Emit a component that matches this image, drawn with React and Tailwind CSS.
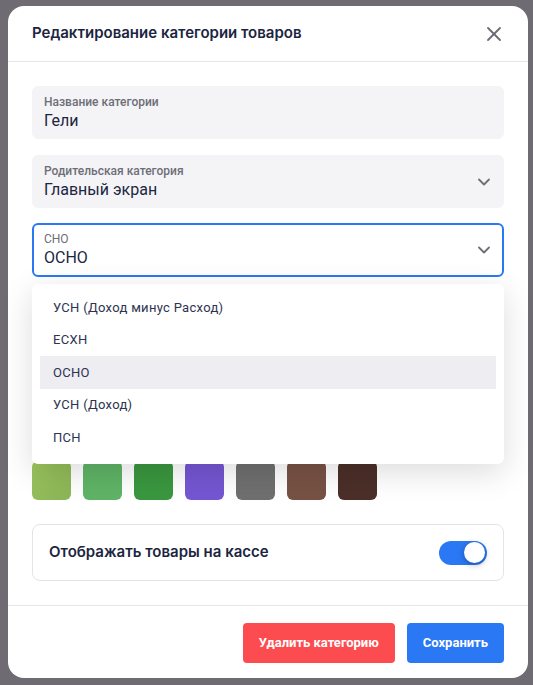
import React, { useState } from "react";
import { X, ChevronDown } from "lucide-react";

const SNO_OPTIONS = ["УСН (Доход минус Расход)", "ЕСХН", "ОСНО", "УСН (Доход)", "ПСН"];

const COLORS = [
    "bg-[#e35252]", "bg-[#e87a3e]", "bg-[#f0b43c]", "bg-[#3d8bf2]", "bg-[#2fb5c9]", "bg-[#d455a6]", "bg-[#9e9e9e]",
    "bg-[#ef5b7a]", "bg-[#f39c50]", "bg-[#e8cf4a]", "bg-[#4a6fe0]", "bg-[#36a89c]", "bg-[#a65ad0]", "bg-[#c0c0c0]",
    "bg-[linear-gradient(135deg,#9cc45e,#8ab556)]", "bg-[#5fb366]", "bg-[#3a973f]", "bg-[#7556d2]", "bg-[#6f6f6f]", "bg-[#775244]", "bg-[#4b2f28]",
];

// Field with floating label on grey background
const Field = ({ label, value, select }) => (
    <div className="flex items-center h-[53px] rounded-md bg-[#f4f4f7] pl-3 pr-[10px]">
        <div className="flex-1 flex flex-col">
            <span className="text-[12px] leading-[16px] font-medium text-[#6e6e78]">{label}</span>
            <span className="text-[16px] leading-[22px] text-[#1c2640]">{value}</span>
        </div>
        {select && <ChevronDown size={20} strokeWidth={2.2} className="text-[#6e6e78]" />}
    </div>
);

export default function App() {
    const [enabled, setEnabled] = useState(true);

    return (
        <div className="w-[533px] h-[685px] bg-[#6f6b72] pt-[6px] pl-2 font-['Roboto',sans-serif]">
            <div className="w-[520px] h-[672px] bg-white rounded-2xl flex flex-col">
                {/* Header */}
                <div className="flex items-center justify-between h-[56px] pl-6 pr-[22px] border-b border-[#e4e4ea]">
                    <h3 className="font-['Inter',sans-serif] font-semibold text-[15px] text-[#1b2540]">
                        Редактирование категории товаров
                    </h3>
                    <X size={24} strokeWidth={1.8} className="text-[#6b6b78]" />
                </div>

                {/* Body */}
                <div className="flex-1 px-6 pt-6 flex flex-col">
                    <Field label="Название категории" value="Гели" />
                    <div className="mt-4">
                        <Field label="Родительская категория" value="Главный экран" select />
                    </div>

                    <div className="relative mt-[15px]">
                        <div className="flex items-center h-[54px] rounded-md border-2 border-[#2b78f4] bg-white pl-[10px] pr-[8px]">
                            <div className="flex-1 flex flex-col">
                                <span className="text-[12px] leading-[16px] text-[#6e6e78]">СНО</span>
                                <span className="text-[16px] leading-[22px] text-[#1c2640]">ОСНО</span>
                            </div>
                            <ChevronDown size={20} strokeWidth={2.2} className="text-[#6e6e78]" />
                        </div>

                        {/* Dropdown menu */}
                        <div className="absolute z-10 left-0 right-0 top-[61px] bg-white rounded-md shadow-[0_8px_32px_rgba(0,0,0,0.14)] pt-[7px] pb-[10px] px-2">
                            {SNO_OPTIONS.map((opt) => (
                                <div
                                    key={opt}
                                    className={`h-[32.5px] flex items-center px-[13px] text-[13px] tracking-[0.3px] text-[#2d3450] ${opt === "ОСНО" ? "bg-[#eeedf2]" : ""}`}
                                >
                                    {opt}
                                </div>
                            ))}
                        </div>
                    </div>

                    {/* Colours (mostly under the open menu) */}
                    <div className="mt-[84px] grid grid-cols-[repeat(7,39px)] gap-x-3 gap-y-[11px]">
                        {COLORS.map((c, i) => (
                            <div key={i} className={`h-[39px] rounded-md ${c}`} />
                        ))}
                    </div>

                    {/* Toggle card */}
                    <div className="mt-6 h-[57px] flex items-center justify-between rounded-lg border border-[#e3e3e8] pl-4 pr-4">
                        <span className="font-['Inter',sans-serif] font-semibold text-[15px] text-[#1b2540]">
                            Отображать товары на кассе
                        </span>
                        <button
                            onClick={() => setEnabled(!enabled)}
                            className="w-[48px] h-[24px] rounded-full bg-[#2b78f4] flex items-center justify-end px-[2px]"
                        >
                            <span className="w-[21px] h-[21px] rounded-full bg-white shadow-[0_2px_6px_rgba(0,0,0,0.3)]" />
                        </button>
                    </div>
                </div>

                {/* Footer */}
                <div className="h-[73px] border-t border-[#e4e4ea] flex items-start justify-end gap-3 px-6 pt-[17px]">
                    <button className="h-[40px] px-[16px] rounded bg-[#fd4c50] text-white text-[13px] font-bold">
                        Удалить категорию
                    </button>
                    <button className="h-[40px] px-[16px] rounded bg-[#2b78f4] text-white text-[13px] font-bold">
                        Сохранить
                    </button>
                </div>
            </div>
        </div>
    );
}
